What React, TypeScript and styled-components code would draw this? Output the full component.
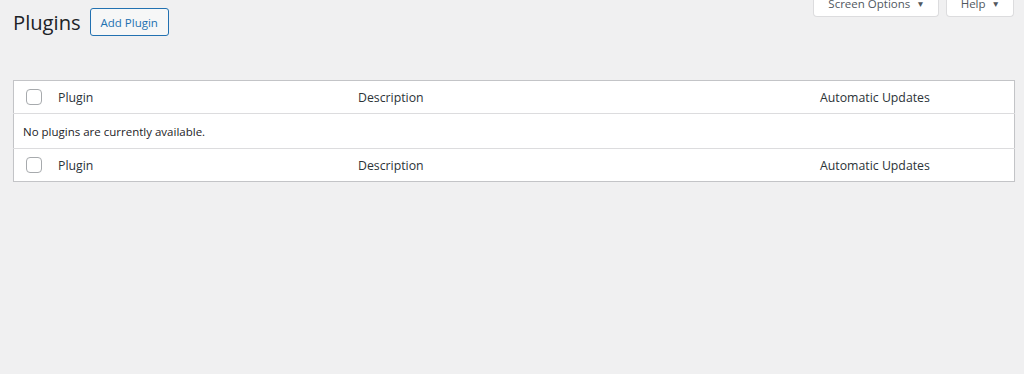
import styled, { createGlobalStyle } from 'styled-components';

const GlobalStyle = createGlobalStyle`
  html, body {
    margin: 0;
    padding: 0;
    background: #f0f0f1;
    color: #3c434a;
    font-family: "Open Sans", "Noto Sans", sans-serif;
    font-size: 11.5px;
  }
`;

const Page = styled.div`
  padding: 0 10px 0 13px;
`;

const MetaLinks = styled.div`
  display: flex;
  justify-content: flex-end;
  gap: 7px;
  height: 0;
`;

const MetaTab = styled.button`
  display: flex;
  align-items: center;
  gap: 6px;
  height: 26px;
  margin-top: -9px;
  padding: 0 13px 0 14px;
  background: #fff;
  border: 1px solid #dcdcde;
  border-top: none;
  border-radius: 0 0 4px 4px;
  color: #50575e;
  font-family: inherit;
  font-size: 11.5px;
`;

const Caret = styled.span`
  font-size: 8.5px;
  color: #50575e;
`;

const Header = styled.div`
  display: flex;
  align-items: center;
  gap: 9px;
  padding-top: 8px;
  height: 28px;
`;

const Title = styled.h1`
  margin: 0;
  font-size: 20.2px;
  font-weight: 400;
  color: #1d2327;
  line-height: 28px;
`;

const AddButton = styled.button`
  height: 28px;
  width: 79px;
  padding: 0;
  border: 1px solid #2271b1;
  border-radius: 3px;
  background: #f6f7f7;
  color: #2271b1;
  font-family: inherit;
  font-size: 11.5px;
`;

const Table = styled.table`
  margin-top: 44px;
  width: 1002px;
  border-collapse: collapse;
  background: #fff;
  border: 1px solid #c3c4c7;
  box-shadow: 0 1px 1px rgba(0, 0, 0, 0.04);
  table-layout: fixed;
`;

const HeadRow = styled.tr<{ $top?: boolean }>`
  height: 33px;
  border-${({ $top }) => ($top ? 'bottom' : 'top')}: 1px solid #dcdcde;
`;

const Th = styled.th<{ $w?: number }>`
  width: ${({ $w }) => ($w ? `${$w}px` : 'auto')};
  padding: 0 10px;
  text-align: left;
  font-weight: 400;
  font-size: 12.3px;
  color: #2c3338;
`;

const CheckCell = styled.td`
  width: 22px;
  padding: 0 0 0 12px;
`;

const Box = styled.span`
  display: block;
  width: 14px;
  height: 14px;
  border: 1px solid #a7aaad;
  border-radius: 4px;
  background: #fff;
`;

const EmptyCell = styled.td`
  height: 34px;
  padding: 0 9px;
  font-size: 11.5px;
  color: #1d2327;
`;

const HeadCells = () => (
  <>
    <CheckCell>
      <Box />
    </CheckCell>
    <Th $w={280}>Plugin</Th>
    <Th>Description</Th>
    <Th $w={184}>Automatic Updates</Th>
  </>
);

export default function App() {
  return (
    <>
      <GlobalStyle />
      <Page>
        <MetaLinks>
          <MetaTab>
            Screen Options <Caret>▼</Caret>
          </MetaTab>
          <MetaTab>
            Help <Caret>▼</Caret>
          </MetaTab>
        </MetaLinks>
        <Header>
          <Title>Plugins</Title>
          <AddButton>Add Plugin</AddButton>
        </Header>
        <Table>
          <thead>
            <HeadRow $top>
              <HeadCells />
            </HeadRow>
          </thead>
          <tbody>
            <tr>
              <EmptyCell colSpan={4}>No plugins are currently available.</EmptyCell>
            </tr>
          </tbody>
          <tfoot>
            <HeadRow>
              <HeadCells />
            </HeadRow>
          </tfoot>
        </Table>
      </Page>
    </>
  );
}
